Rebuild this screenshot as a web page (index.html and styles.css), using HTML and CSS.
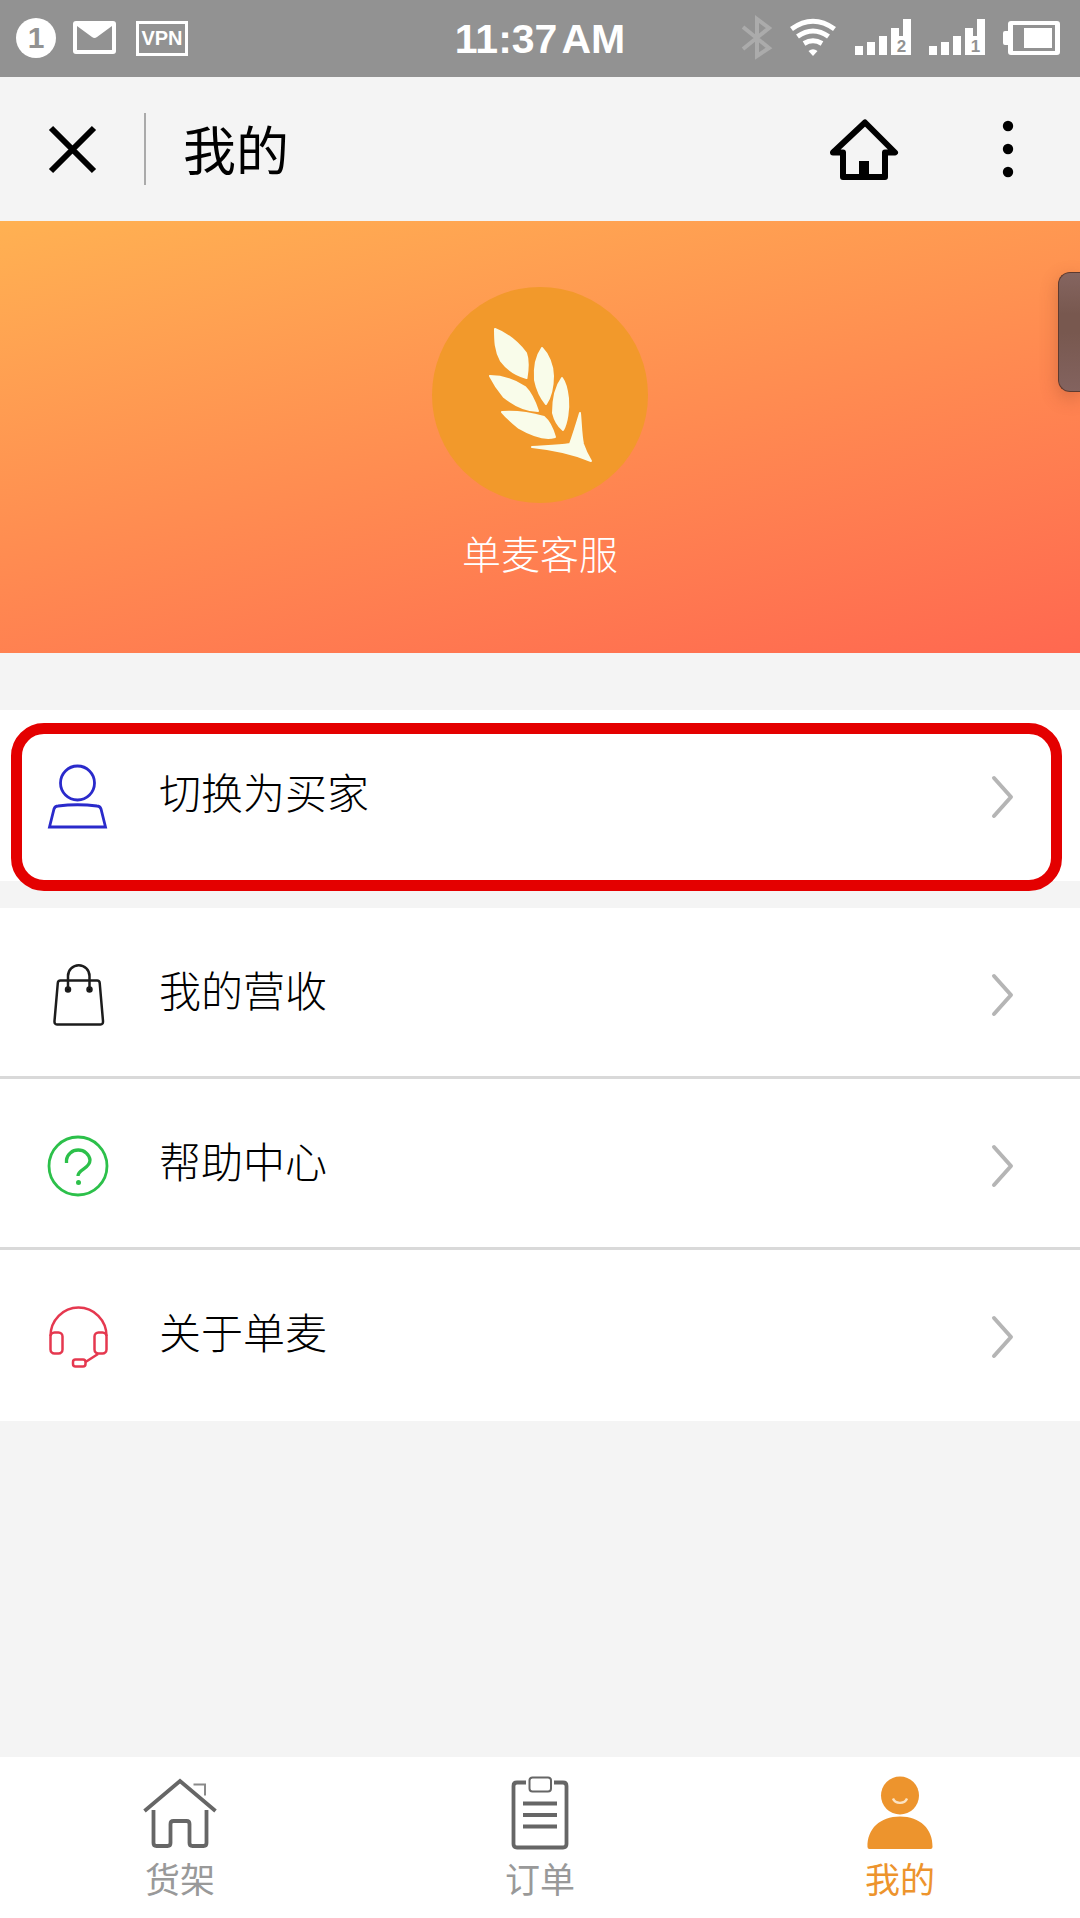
FILE: index.html
```html
<!DOCTYPE html>
<html lang="zh-CN">
<head>
<meta charset="utf-8">
<meta name="viewport" content="width=device-width, initial-scale=1">
<title>我的</title>
<link rel="stylesheet" href="styles.css">
</head>
<body>
<div class="status">
  <div class="status-left">
    <span class="count">1</span>
    <svg width="44" height="42" viewBox="74 17 44 42" aria-hidden="true">
      <rect x="73" y="21" width="43" height="33" rx="3" fill="#fff"/>
      <path d="M77 26 L92 37 Q94.500 39 97 37 L112 26 V50 H77Z" fill="#929292"/>
    </svg>
    <span class="vpn">VPN</span>
  </div>
  <time class="clock">11:37<span class="meridiem">AM</span></time>
  <div class="status-right">
    <svg width="30" height="42" viewBox="742 17 30 42" aria-hidden="true">
      <path d="M743 27 L769 48 L757 56 V19 L769 28 L743 49" fill="none" stroke="#ababab" stroke-width="4"/>
    </svg>
    <svg width="47" height="42" viewBox="790 17 47 42" aria-hidden="true">
      <g fill="none" stroke="#fff" stroke-width="5">
        <path d="M791.500 29 Q813 13.500 834.500 29"/>
        <path d="M797.500 36.500 Q813 25.500 828.500 36.500"/>
        <path d="M804 43.500 Q813 38 822 43.500"/>
      </g>
      <path d="M808.500 51 Q813 47.500 817.500 51 L813 56Z" fill="#fff"/>
    </svg>
    <svg width="56" height="42" viewBox="855 17 56 42" aria-hidden="true">
      <path fill="#fff" d="M855 46h8v9h-8zM867 42h8v13h-8zM879 36h8v19h-8zM891 28h8v8h4V19h8v36h-20z"/>
      <text class="sim" x="901.500" y="52">2</text>
    </svg>
    <svg width="56" height="42" viewBox="929 17 56 42" aria-hidden="true">
      <path fill="#fff" d="M929 46h8v9h-8zM941 42h8v13h-8zM953 36h8v19h-8zM965 28h8v8h4V19h8v36h-20z"/>
      <text class="sim" x="975.500" y="52">1</text>
    </svg>
    <svg width="61" height="42" viewBox="1003 17 61 42" aria-hidden="true">
      <path fill="#fff" fill-rule="evenodd" d="M1011 21h46a3 3 0 0 1 3 3v28a3 3 0 0 1-3 3h-46a3 3 0 0 1-3-3v-7h-3a2 2 0 0 1-2-2V33a2 2 0 0 1 2-2h3v-7a3 3 0 0 1 3-3zM1013 25v26h42V25z"/>
      <rect x="1024" y="28" width="28" height="20" fill="#fff"/>
    </svg>
  </div>
</div>

<header class="bar">
  <button class="icon-btn close" aria-label="关闭">
    <svg width="48" height="48" viewBox="0 0 48 48"><path d="M3 3 46 46M46 3 3 46" stroke="#000" stroke-width="6"/></svg>
  </button>
  <h1 class="title">我的</h1>
  <button class="icon-btn home" aria-label="首页">
    <svg width="68" height="62" viewBox="830 118 68 62">
      <path d="M865 122.500 895 152.500H885V177H843V152.500H833Z" fill="none" stroke="#000" stroke-width="6" stroke-linejoin="round"/>
      <path d="M859 161h10v16h-10z"/>
    </svg>
  </button>
  <button class="icon-btn" aria-label="更多">
    <svg width="12" height="58" viewBox="0 0 12 58"><circle cx="6" cy="6" r="5.200"/><circle cx="6" cy="29" r="5.200"/><circle cx="6" cy="52" r="5.200"/></svg>
  </button>
</header>

<main class="content">
  <section class="hero">
    <svg class="avatar" width="216" height="216" viewBox="432 287 216 216" role="img" aria-label="单麦">
      <circle cx="540" cy="395" r="108" fill="#f2992b"/>
      <g fill="#f9fcea" stroke="#f9fcea" stroke-width="2" stroke-linejoin="round">
        <path d="M495 329 C508 334 519 344 526 353 C529 361 528 369 526.500 378 C515 375 507 369 501 361 C495 350 495 340 495 329Z"/>
        <path d="M490 376 C502 376 514 380 525 387 C532 394 535 402 538 411 C526 411 514 405 504 397 C498 390 494 384 490 376Z"/>
        <path d="M502 412 C516 411 530 413 544 417 C550 422 553 430 555 437 C544 440 531 435 519 428 C513 423 507 418 502 412Z"/>
        <path d="M542 348 C537 355 534 367 535 380 C537 390 541 398 546 404 C550 398 553 387 553 376 C553 365 548 354 542 348Z"/>
        <path d="M562 378 C556 386 553 399 553 413 C555 421 558 426 563 430 C567 423 569 409 568 398 C567 389 565 382 562 378Z"/>
        <path d="M580 413 C581 423 581 434 583 444 C585 450 588 456 591 461 C570 452 551 449 532 447 C545 446 557 446 570 444 C574 433 577 423 580 413Z"/>
      </g>
    </svg>
    <p class="name">单麦客服</p>
    <div class="handle"></div>
  </section>

  <nav class="menu">
    <a class="row marked" href="#buyer">
      <svg class="row-icon" viewBox="45 764 66 66" fill="none" stroke="#2a2acb" stroke-width="2.800" aria-hidden="true">
        <circle cx="77.500" cy="783" r="17"/>
        <path d="M49.500 827 L54 809 Q55 806 58 806 Q77.500 803.500 97 806 Q100 806 101 809 L105.500 827Z"/>
      </svg>
      <span class="label">切换为买家</span>
      <svg class="chevron" viewBox="0 0 24 44" aria-hidden="true"><path d="M4 3 21 22 4 41"/></svg>
    </a>
    <div class="group">
      <a class="row" href="#income">
        <svg class="row-icon" viewBox="45 962 66 66" fill="none" stroke="#1c1c1c" stroke-width="2.500" aria-hidden="true">
          <path d="M60.500 980.500h36.500q2.500 0 2.700 2.500l3.300 38q.2 3.500-2.500 3.500H57q-2.700 0-2.500-3.500l3.300-38q.2-2.500 2.700-2.500z"/>
          <path d="M68 989v-13a10.500 10.500 0 0 1 21.500 0v13"/>
          <circle cx="68" cy="989.500" r="2" fill="#000"/><circle cx="89.500" cy="989.500" r="2" fill="#000"/>
        </svg>
        <span class="label">我的营收</span>
        <svg class="chevron" viewBox="0 0 24 44" aria-hidden="true"><path d="M4 3 21 22 4 41"/></svg>
      </a>
      <a class="row" href="#help">
        <svg class="row-icon" viewBox="45 1133 66 66" fill="none" stroke="#2cc04a" stroke-width="2.800" aria-hidden="true">
          <circle cx="78" cy="1166" r="29"/>
          <path stroke-width="3.300" d="M66.500 1163v-3a11.800 11 0 0 1 23.500 0c0 9-12 9-12 16"/>
          <circle cx="78.500" cy="1182.500" r="2.500" fill="#2cc04a" stroke="none"/>
        </svg>
        <span class="label">帮助中心</span>
        <svg class="chevron" viewBox="0 0 24 44" aria-hidden="true"><path d="M4 3 21 22 4 41"/></svg>
      </a>
      <a class="row" href="#about">
        <svg class="row-icon" viewBox="45 1304 66 66" fill="none" stroke="#e5384f" stroke-width="2.500" aria-hidden="true">
          <path d="M50.500 1336a28 28.500 0 0 1 56 0"/>
          <rect x="50.500" y="1332.500" width="12" height="21" rx="4"/>
          <rect x="94.500" y="1332.500" width="12" height="21" rx="4"/>
          <rect x="73" y="1359.500" width="12.500" height="7" rx="2.500"/>
          <path d="M85.500 1362 98 1354"/>
        </svg>
        <span class="label">关于单麦</span>
        <svg class="chevron" viewBox="0 0 24 44" aria-hidden="true"><path d="M4 3 21 22 4 41"/></svg>
      </a>
    </div>
  </nav>
</main>

<nav class="tabs">
  <a class="tab" href="#shelf">
    <svg width="76" height="76" viewBox="142 1775 76 76" fill="none" stroke="#666" stroke-width="3.800" aria-hidden="true">
      <path d="M144.500 1811 180 1781 215.500 1811"/>
      <path d="M153.500 1810v33q0 3 3 3h11q3 0 3-3v-19q0-3 3-3h13q3 0 3 3v19q0 3 3 3h11q3 0 3-3v-33"/>
      <path d="M193.500 1784.500h11.500v11" stroke="#8a8a8a" stroke-width="2"/>
    </svg>
    <span>货架</span>
  </a>
  <a class="tab" href="#orders">
    <svg width="76" height="76" viewBox="502 1775 76 76" fill="none" stroke="#666" stroke-width="3.800" aria-hidden="true">
      <path d="M526 1782.500h-9q-3.500 0-3.500 3.500v58q0 3.500 3.500 3.500h46q3.500 0 3.500-3.500v-58q0-3.500-3.500-3.500h-9M523 1803.500h34M523 1815h34M523 1826.500h34"/>
      <rect x="529.500" y="1777.500" width="21.500" height="14" rx="3" stroke-width="2"/>
    </svg>
    <span>订单</span>
  </a>
  <a class="tab current" href="#me" aria-current="page">
    <svg width="76" height="76" viewBox="862 1775 76 76" fill="#ed942d" aria-hidden="true">
      <circle cx="900" cy="1795.500" r="19"/>
      <path d="M867.500 1847 C867 1829 880 1816.500 900 1816.500 C920 1816.500 933 1829 932.500 1847 Q932.500 1849 930.500 1849 H869.500 Q867.500 1849 867.500 1847Z"/>
      <path d="M893 1798.500a7.300 6 0 0 0 14 0" fill="none" stroke="#fbe3c3" stroke-width="2.300"/>
    </svg>
    <span>我的</span>
  </a>
</nav>
</body>
</html>
```

FILE: styles.css
```css
*,
*::after {
  box-sizing: border-box;
}

body {
  margin: 0;
  min-height: 100vh;
  display: flex;
  flex-direction: column;
  background: #f4f4f4;
  color: #000;
  font-family: "Noto Sans CJK SC", "Noto Sans", sans-serif;
}

a {
  color: inherit;
  text-decoration: none;
}

svg {
  display: block;
  flex: none;
  overflow: visible;
}

/* Status bar */
.status {
  display: grid;
  grid-template-columns: 1fr auto 1fr;
  padding: 17px 16px 18px;
  background: #929292;
  color: #fff;
  font-family: "Liberation Sans", Arial, sans-serif;
  font-weight: 700;
}

.status-left,
.status-right {
  display: flex;
  align-items: center;
  gap: 18px;
}

.status-right {
  justify-content: flex-end;
}

.count {
  width: 40px;
  height: 40px;
  border-radius: 50%;
  background: #fff;
  color: #929292;
  font-size: 30px;
  line-height: 40px;
  text-align: center;
}

.vpn {
  width: 52px;
  height: 35px;
  border: 3px solid #fff;
  font-size: 20px;
  line-height: 29px;
  text-align: center;
}

.clock {
  font-size: 41px;
  line-height: 44px;
  height: 42px;
}

.meridiem {
  margin-left: 4px;
}

.sim {
  fill: #929292;
  font-size: 17px;
  text-anchor: middle;
}

/* Title bar */
.bar {
  display: flex;
  align-items: center;
  height: 144px;
  padding: 0 66px 0 48px;
}

.icon-btn {
  padding: 0;
  border: 0;
  background: none;
}

.close {
  margin-right: 48px;
}

.title {
  flex: 1;
  margin: 0;
  padding: 0 0 2px 37px;
  border-left: 2px solid #aaa;
  font-size: 53px;
  line-height: 70px;
  font-weight: 400;
}

.home {
  margin-right: 104px;
}

/* Profile banner */
.content {
  flex: 1;
}

.hero {
  position: relative;
  display: flex;
  flex-direction: column;
  align-items: center;
  gap: 20px;
  height: 432px;
  padding-top: 66px;
  background: linear-gradient(168deg, #ffb152, #ff6850);
}

.name {
  margin: 0;
  color: #fff;
  font-size: 39px;
  line-height: 58px;
  font-weight: 300;
}

.handle {
  position: absolute;
  top: 51px;
  right: 0;
  width: 22px;
  height: 120px;
  border: 1px solid #5d3a30;
  border-right: 0;
  border-radius: 12px 0 0 12px;
  background: linear-gradient(#856560, #78584f 35%, #78584f 50%, #83635f);
  box-shadow: 0 6px 18px rgba(120, 50, 30, 0.3);
}

/* Menu */
.menu {
  display: flex;
  flex-direction: column;
  gap: 27px;
  padding: 57px 0 48px;
}

.row {
  display: flex;
  align-items: center;
  height: 171px;
  padding: 6px 66px 0 45px;
  border-bottom: 3px solid transparent;
  background: #fff;
}

.group .row:not(:last-child) {
  border-bottom-color: #d9d9d9;
}

.marked {
  position: relative;
}

.marked::after {
  content: "";
  position: absolute;
  top: 13px;
  right: 18px;
  left: 11px;
  height: 168px;
  border: 11px solid #e40000;
  border-radius: 33px;
}

.row-icon {
  width: 66px;
  height: 66px;
}

.label {
  flex: 1;
  padding: 0 48px 12px;
  font-size: 42px;
  line-height: 60px;
  font-weight: 300;
}

.chevron {
  width: 24px;
  height: 44px;
  fill: none;
  stroke: #b5b5b5;
  stroke-width: 4;
  stroke-linecap: round;
  stroke-linejoin: round;
}

/* Bottom tabs */
.tabs {
  display: flex;
  height: 161px;
  padding-top: 18px;
  background: #fff;
  color: #999;
  font-size: 35px;
  line-height: 54px;
}

.tab {
  flex: 1;
  display: flex;
  flex-direction: column;
  align-items: center;
}

.current {
  color: #ed942d;
}
```
